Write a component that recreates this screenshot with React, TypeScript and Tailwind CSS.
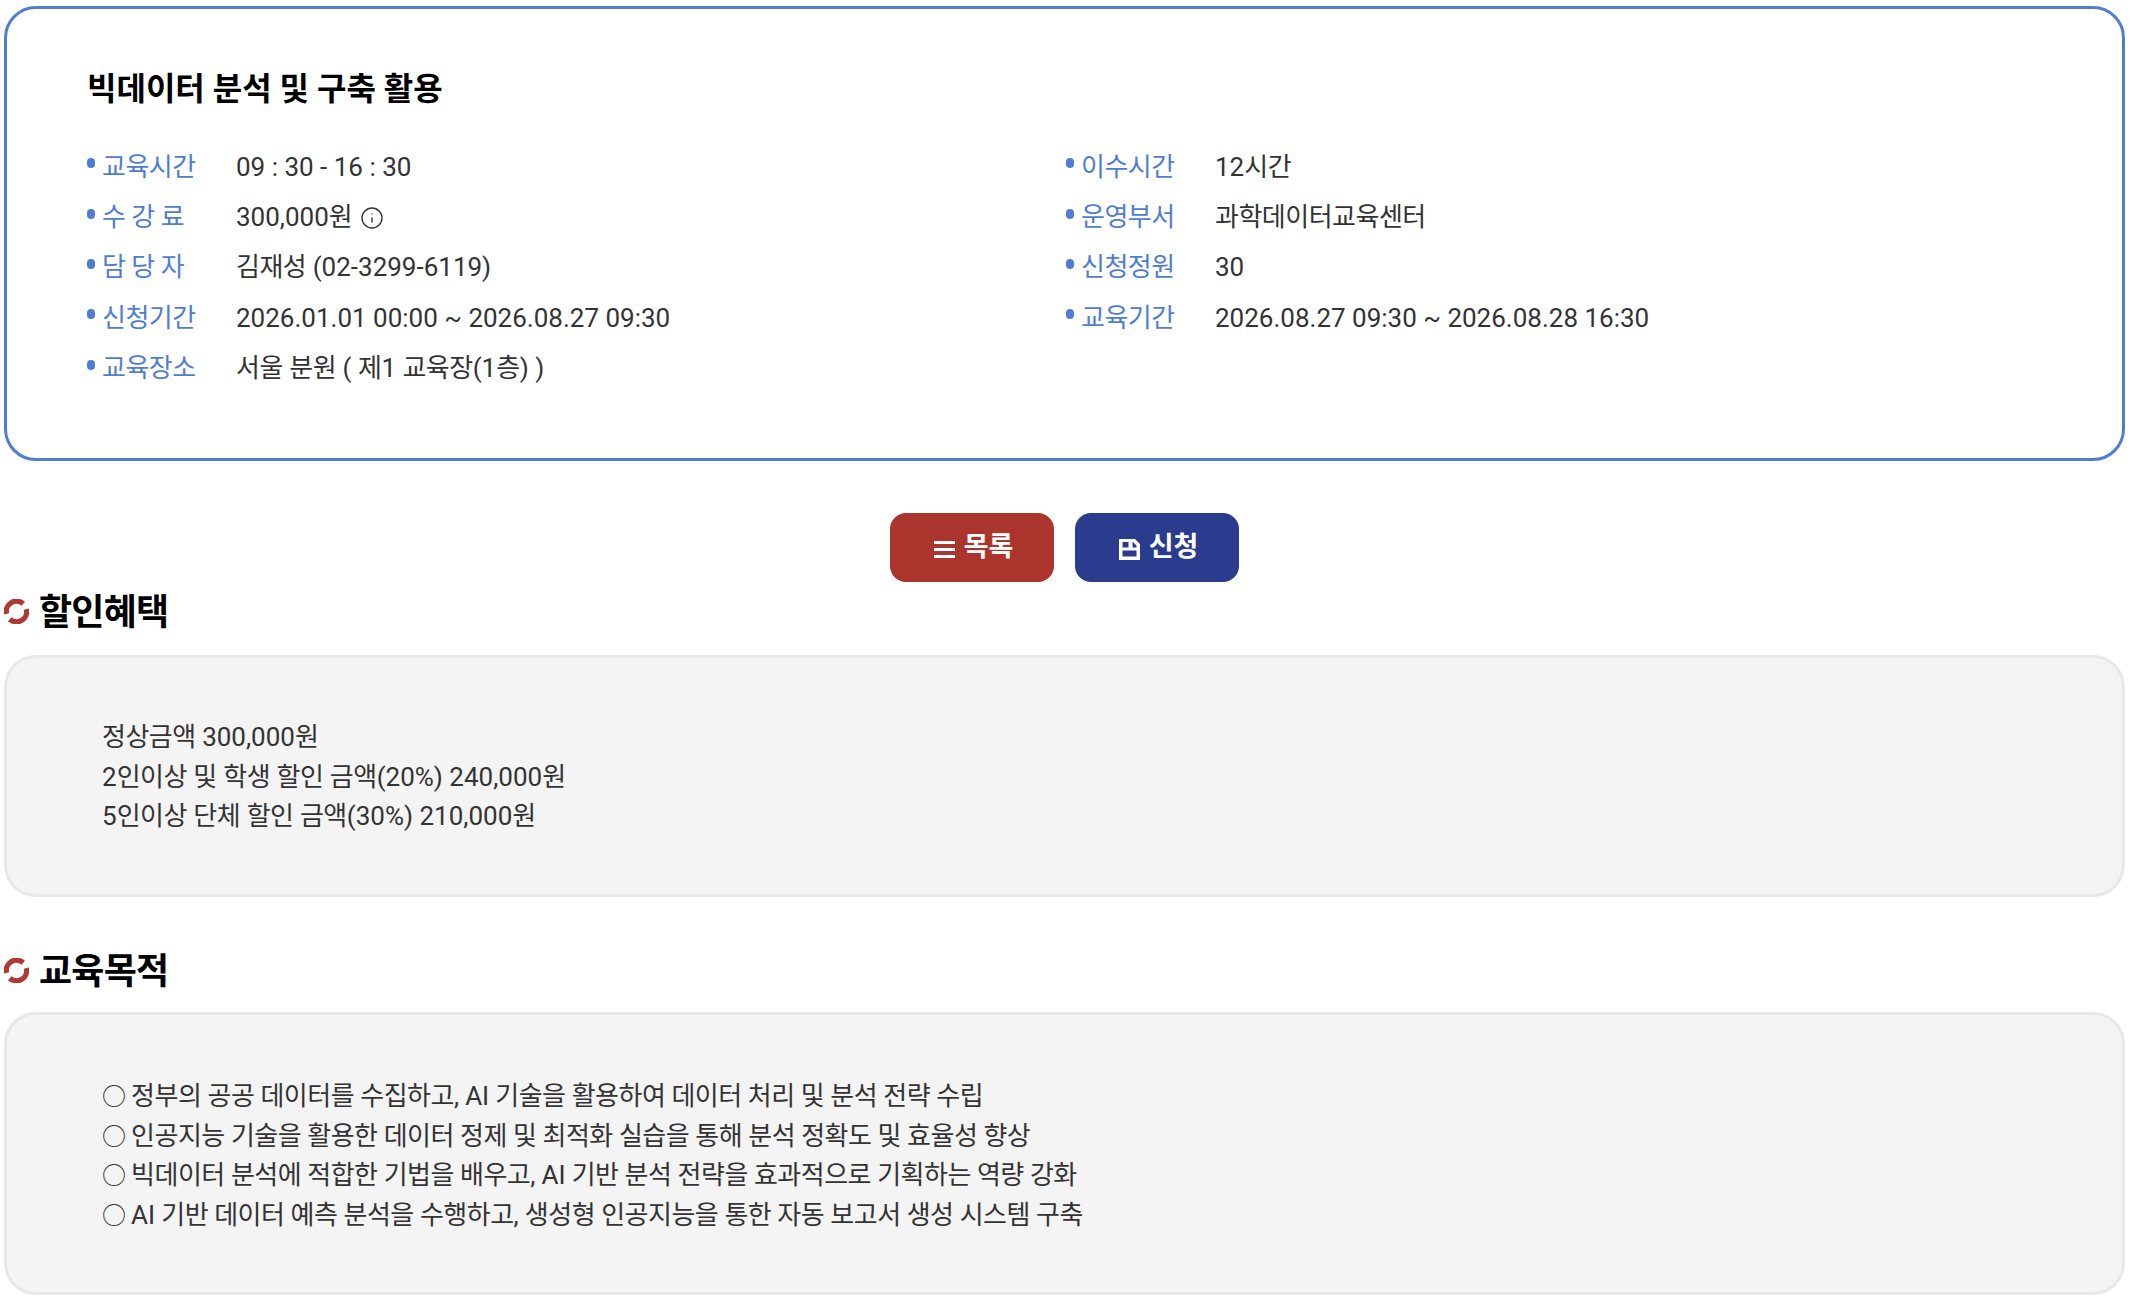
import React from 'react'
import { Info } from 'lucide-react'

const leftRows: { label: string; value: string; info?: boolean }[] = [
  { label: '교육시간', value: '09 : 30 - 16 : 30' },
  { label: '수 강 료', value: '300,000원', info: true },
  { label: '담 당 자', value: '김재성 (02-3299-6119)' },
  { label: '신청기간', value: '2026.01.01 00:00 ~ 2026.08.27 09:30' },
  { label: '교육장소', value: '서울 분원 ( 제1 교육장(1층) )' },
]

const rightRows = [
  { label: '이수시간', value: '12시간' },
  { label: '운영부서', value: '과학데이터교육센터' },
  { label: '신청정원', value: '30' },
  { label: '교육기간', value: '2026.08.27 09:30 ~ 2026.08.28 16:30' },
]

const discounts = ['정상금액 300,000원', '2인이상 및 학생 할인 금액(20%) 240,000원', '5인이상 단체 할인 금액(30%) 210,000원']

const goals = [
  '정부의 공공 데이터를 수집하고, AI 기술을 활용하여 데이터 처리 및 분석 전략 수립',
  '인공지능 기술을 활용한 데이터 정제 및 최적화 실습을 통해 분석 정확도 및 효율성 향상',
  '빅데이터 분석에 적합한 기법을 배우고, AI 기반 분석 전략을 효과적으로 기획하는 역량 강화',
  'AI 기반 데이터 예측 분석을 수행하고, 생성형 인공지능을 통한 자동 보고서 생성 시스템 구축',
]

// hangul runs sit tighter than the latin digits and spaces next to them
const Txt = ({ children }: { children: string }) => (
  <>
    {children.split(/([가-힣]+)/).map((part, i) =>
      i % 2 ? (
        <span key={i} className="tracking-[-0.5px]">
          {part}
        </span>
      ) : (
        part
      ),
    )}
  </>
)

const InfoRow = ({ label, value, info }: { label: string; value: string; info?: boolean }) => (
  <div className="flex h-[50.4px] items-center">
    <span className="mb-2 h-[10px] w-2 shrink-0 rounded-full bg-[#4f7dd3]" />
    <span className="ml-[7px] w-[134px] shrink-0 tracking-[-0.5px] text-[#4f7dd3]">{label}</span>
    <span className="flex items-center gap-2 whitespace-pre text-[#333]">
      <span>
        <Txt>{value}</Txt>
      </span>
      {info && <Info className="h-6 w-6" strokeWidth={1.4} />}
    </span>
  </div>
)

const SectionTitle = ({ children }: { children: string }) => (
  <h2 className="flex items-center gap-[10px] text-[36px] leading-[44px] font-bold tracking-[-0.75px] text-black">
    <svg viewBox="0 0 26 26" className="mb-1 h-[25px] w-[25px]" fill="none" stroke="#ae3a33" strokeWidth="5.5">
      <path d="M2.8 15.5A10.5 10.5 0 0 1 20 5" />
      <path d="M23.2 10.5A10.5 10.5 0 0 1 6 21" />
    </svg>
    {children}
  </h2>
)

export default function App() {
  return (
    <div className="bg-white pt-[6px] pr-[6px] pl-[4px] font-['Roboto','Noto_Sans_CJK_KR',sans-serif] text-[26px]">
      <section className="h-[455px] rounded-[32px] border-[3px] border-[#4f7dd3] pt-[52px] pl-[80px]">
        <h1 className="text-[32px] leading-[56px] font-bold text-black">빅데이터 분석 및 구축 활용</h1>
        <div className="mt-[25px] grid grid-cols-[979px_1fr]">
          <div>
            {leftRows.map((row) => (
              <InfoRow key={row.label} {...row} />
            ))}
          </div>
          <div>
            {rightRows.map((row) => (
              <InfoRow key={row.label} {...row} />
            ))}
          </div>
        </div>
      </section>

      <div className="mt-[52px] flex justify-center gap-[21px]">
        <button type="button" className="flex h-[69px] w-[164px] items-center justify-center gap-[9px] rounded-[16px] bg-[#ab342c] pl-[3px] text-[27px] font-bold text-white">
          <svg viewBox="0 0 21 17" className="mt-1 h-[17px] w-[21px]" fill="none" stroke="currentColor" strokeWidth="3">
            <path d="M0 1.5h21M0 8.5h21M0 15.5h21" />
          </svg>
          <span>목록</span>
        </button>
        <button type="button" className="flex h-[69px] w-[164px] items-center justify-center gap-[9px] rounded-[16px] bg-[#2b3c8f] pl-[3px] text-[27px] font-bold text-white">
          <svg viewBox="0 0 21 21" className="mt-1 h-[21px] w-[21px]" fill="currentColor">
            <path fillRule="evenodd" d="M0 0h16l5 5v16H0zM3.5 11.5v6h14v-6zM3.5 3v5.5h6V3zM13.5 3v5.5h4V6.5L14 3z" />
          </svg>
          <span>신청</span>
        </button>
      </div>

      <div className="mt-[9px] mb-[20px]">
        <SectionTitle>할인혜택</SectionTitle>
      </div>
      <section className="h-[242px] rounded-[32px] border-[3px] border-[#e8e8e8] bg-[#f4f4f4] pt-[60px] pl-[95px] leading-[39.5px] text-[#333]">
        {discounts.map((line) => (
          <p key={line}>
            <Txt>{line}</Txt>
          </p>
        ))}
      </section>

      <div className="mt-[53px] mb-[18px]">
        <SectionTitle>교육목적</SectionTitle>
      </div>
      <section className="h-[283px] rounded-[32px] border-[3px] border-[#e8e8e8] bg-[#f4f4f4] pt-[62px] pl-[95px] leading-[39.5px] text-[#333] [word-spacing:-0.35px]">
        {goals.map((line) => (
          <p key={line}>
            <span className="mr-[-1px] text-[24px] leading-none">○</span> <Txt>{line}</Txt>
          </p>
        ))}
      </section>
    </div>
  )
}
